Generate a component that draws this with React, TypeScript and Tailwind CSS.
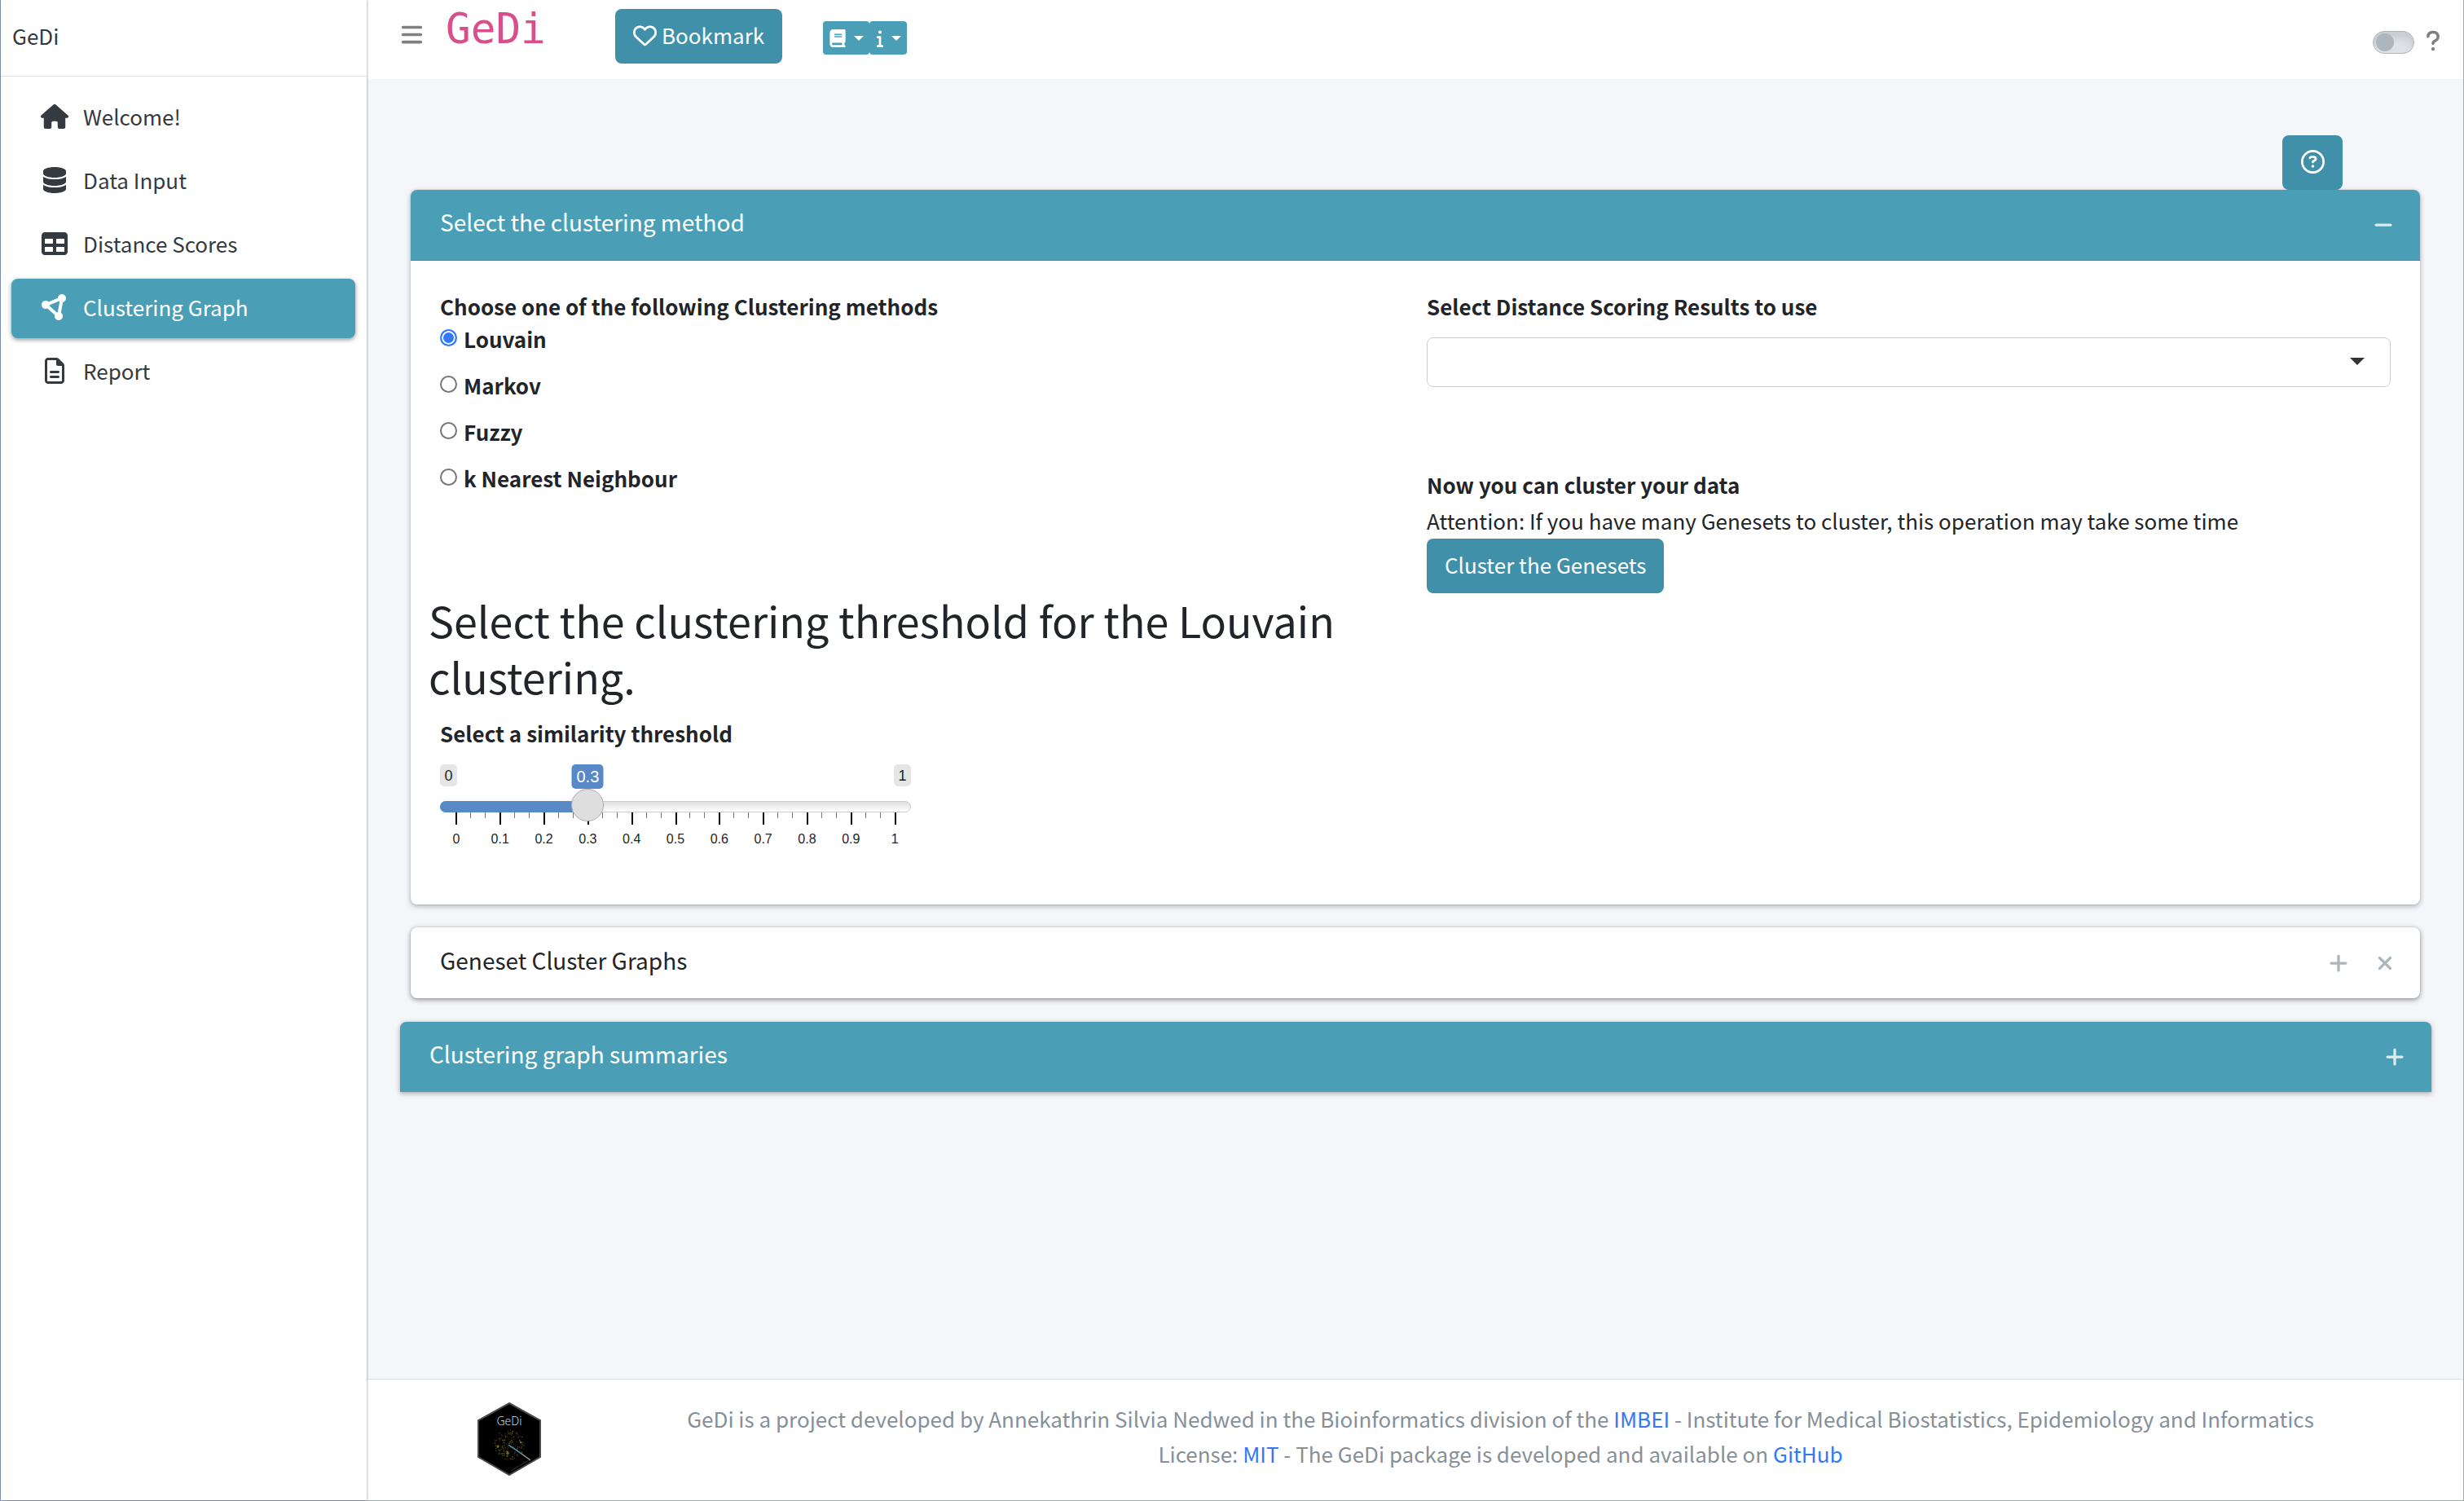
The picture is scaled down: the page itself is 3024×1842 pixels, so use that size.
import React, { useState } from "react";
import {
  FaBars,
  FaBook,
  FaCircleNodes,
  FaDatabase,
  FaHouse,
  FaInfo,
  FaMinus,
  FaPlus,
  FaQuestion,
  FaRegCircleQuestion,
  FaRegFileLines,
  FaRegHeart,
  FaTable,
  FaXmark,
} from "react-icons/fa6";

const navItems = [
  { label: "Welcome!", Icon: FaHouse },
  { label: "Data Input", Icon: FaDatabase },
  { label: "Distance Scores", Icon: FaTable },
  { label: "Clustering Graph", Icon: FaCircleNodes },
  { label: "Report", Icon: FaRegFileLines },
];

const methods = ["Louvain", "Markov", "Fuzzy", "k Nearest Neighbour"];
const gridLabels = ["0", "0.1", "0.2", "0.3", "0.4", "0.5", "0.6", "0.7", "0.8", "0.9", "1"];

function Caret() {
  return (
    <svg viewBox="0 0 12 6" className="h-[6px] w-[12px]" aria-hidden="true">
      <path d="M0 0h12L6 6z" fill="currentColor" />
    </svg>
  );
}

function Sidebar() {
  return (
    <aside className="z-10 flex w-[449px] shrink-0 flex-col bg-white shadow-[0_0_3px_rgba(0,0,0,0.45)]">
      <div className="flex h-[94px] items-center border-b border-[#dee2e6] pb-[6px] pl-[14px] text-[#343a40]">
        GeDi
      </div>
      <nav className="flex flex-col gap-[5px] pt-[14px] pr-[14px] pl-[13px]">
        {navItems.map(({ label, Icon }) => (
          <a
            key={label}
            href="#"
            aria-current={label === "Clustering Graph" ? "page" : undefined}
            className={
              label === "Clustering Graph"
                ? "flex h-[73px] items-center rounded-[8px] bg-[#4a9fb6] pl-[34px] text-white shadow-[0_2px_6px_rgba(0,0,0,0.24),0_2px_4px_rgba(0,0,0,0.2)]"
                : "flex h-[73px] items-center rounded-[8px] pl-[34px] text-[#343a40]"
            }
          >
            <span className="flex w-[38px] justify-center pb-[4px]">
              <Icon size={label === "Welcome!" ? 34 : 32} />
            </span>
            <span className="pb-[4px] pl-[16px]">{label}</span>
          </a>
        ))}
      </nav>
    </aside>
  );
}

function Navbar() {
  return (
    <header className="flex h-[97px] items-start bg-white pr-[23px] pl-[41px]">
      <button aria-label="Toggle sidebar" className="mt-[28px] text-[#808080]">
        <FaBars size={29} />
      </button>
      <code className="mt-[4px] ml-[27px] w-[208px] font-['DejaVu_Sans_Mono',monospace] text-[51px] leading-[64px] text-[#d84f8b]">
        GeDi
      </code>
      <button className="mt-[11px] flex h-[67px] items-center gap-[6px] rounded-[8px] bg-[#4190aa] px-[22px] text-white">
        <FaRegHeart size={29} className="mb-[2px]" />
        <span className="pb-[4px]">Bookmark</span>
      </button>
      <div className="mt-[26px] ml-[50px] flex text-white">
        <button aria-label="Documentation" className="flex h-[41px] w-[57px] items-center justify-center gap-[9px] rounded-[4px] bg-[#4a9fb6]">
          <FaBook size={22} />
          <Caret />
        </button>
        <button aria-label="Information" className="flex h-[41px] w-[46px] items-center justify-center gap-[9px] rounded-[4px] bg-[#4a9fb6]">
          <FaInfo size={22} className="w-[10px]" />
          <Caret />
        </button>
      </div>
      <label className="relative mt-[38px] ml-auto flex">
        <input
          type="checkbox"
          role="switch"
          aria-label="Dark mode"
          className="h-[28px] w-[51px] appearance-none rounded-full border border-[#adb5bd] bg-[#dee2e6] shadow-[inset_0_8px_8px_rgba(0,0,0,0.1)]"
        />
        <span className="pointer-events-none absolute top-[3px] left-[4px] size-[22px] rounded-full bg-[#adb5bd]" />
      </label>
      <button aria-label="Help" className="mt-[36px] ml-[9px] text-[#808080]">
        <FaQuestion size={28} />
      </button>
    </header>
  );
}

function ThresholdSlider() {
  const [value, setValue] = useState(0.3);
  return (
    <div className="mt-[18px] w-[578px] font-['Liberation_Sans',Arial,sans-serif] text-[#212529]">
      <div className="flex h-[30px] items-start justify-between text-[18px]">
        <span className="flex h-[27px] w-[21px] items-center justify-center rounded-[5px] bg-[#e5e5e5]">0</span>
        <span className="flex h-[27px] w-[21px] items-center justify-center rounded-[5px] bg-[#e5e5e5]">1</span>
      </div>
      <div className="relative">
        <div className="absolute top-[15px] left-0 h-[14px] w-full rounded-[7px] border border-[#cccccc] bg-linear-to-b from-[#dedede] to-white" />
        <div
          className="absolute top-[15px] left-0 h-[14px] rounded-l-[7px] bg-[#5689c5]"
          style={{ width: 20 + value * 538 }}
        />
        <svg viewBox="0 0 578 15" className="absolute top-[29px] left-0 h-[15px] w-full" shapeRendering="crispEdges" aria-hidden="true">
          {Array.from({ length: 31 }, (_, i) => (
            <rect
              key={i}
              x={Math.round(19 + (i * 539) / 30)}
              y={0}
              width={i % 3 === 0 ? 2 : 1}
              height={i % 3 === 0 ? 15 : 7}
              fill={i % 3 === 0 ? "#000000" : "#777777"}
            />
          ))}
        </svg>
        <output
          htmlFor="threshold"
          className="absolute -top-[30px] flex h-[30px] w-[39px] -translate-x-1/2 items-center justify-center rounded-[5px] bg-[#5689c5] text-[20px] text-white"
          style={{ left: 20 + value * 538 }}
        >
          {value}
        </output>
        <input
          id="threshold"
          type="range"
          min={0}
          max={1}
          step={0.1}
          value={value}
          onChange={(e) => setValue(Number(e.target.value))}
          className="relative block h-[40px] w-full appearance-none bg-transparent [&::-webkit-slider-thumb]:size-[40px] [&::-webkit-slider-thumb]:appearance-none [&::-webkit-slider-thumb]:rounded-full [&::-webkit-slider-thumb]:border [&::-webkit-slider-thumb]:border-[#ababab] [&::-webkit-slider-thumb]:bg-[#dedede]"
        />
      </div>
      <div className="-mx-[7px] mt-[12px] grid grid-cols-11 text-center text-[16px] leading-[20px]">
        {gridLabels.map((l) => (
          <span key={l}>{l}</span>
        ))}
      </div>
    </div>
  );
}

function MethodCard() {
  const [method, setMethod] = useState("Louvain");
  return (
    <section className="mr-[14px] ml-[13px] rounded-[8px] bg-white pb-[70px] shadow-[0_0_2px_rgba(0,0,0,0.125),0_2px_6px_rgba(0,0,0,0.3)]">
      <div className="flex h-[87px] items-center justify-between rounded-t-[8px] border-b border-[#3f8ca2] bg-[#4a9fb6] pr-[32px] pl-[36px] text-white">
        <h3 className="pb-[8px] text-[28px]">Select the clustering method</h3>
        <button aria-label="Collapse" className="text-white/80">
          <FaMinus size={26} />
        </button>
      </div>
      <div className="grid grid-cols-2 px-[22px] pt-[36px]">
        <div>
          <fieldset className="px-[14px]">
            <legend className="font-bold">Choose one of the following Clustering methods</legend>
            <div className="flex flex-col gap-[17px]">
              {methods.map((m) => (
                <label key={m} className="flex items-start gap-[8px] font-bold">
                  <input
                    type="radio"
                    name="method"
                    checked={method === m}
                    onChange={() => setMethod(m)}
                    className="mt-[8px] size-[21px] appearance-none rounded-full border-2 border-[#767676] bg-white checked:border-[#3478f6] checked:bg-[#3478f6] checked:shadow-[inset_0_0_0_2px_white]"
                  />
                  {m}
                </label>
              ))}
            </div>
          </fieldset>
          <h2 className="mt-[119px] text-[52px] leading-[69px]">
            Select the clustering threshold for the Louvain clustering.
          </h2>
          <div className="px-[14px] pt-[16px]">
            <label htmlFor="threshold" className="block font-bold">
              Select a similarity threshold
            </label>
            <ThresholdSlider />
          </div>
        </div>
        <div className="px-[14px]">
          <label htmlFor="scores" className="block font-bold">
            Select Distance Scoring Results to use
          </label>
          <div className="relative mt-[18px]">
            <select id="scores" className="block h-[61px] w-full appearance-none rounded-[8px] border border-[#cccccc] bg-white px-[24px]">
              <option value=""></option>
            </select>
            <svg viewBox="0 0 18 9" className="pointer-events-none absolute top-[25px] right-[32px] h-[9px] w-[18px]" aria-hidden="true">
              <path d="M0 0h18L9 9z" fill="#333333" />
            </svg>
          </div>
          <p className="mt-[98px] leading-[44px] font-bold">Now you can cluster your data</p>
          <p className="leading-[44px]">
            Attention: If you have many Genesets to cluster, this operation may take some time
          </p>
          <button className="flex h-[67px] items-center rounded-[8px] bg-[#4190aa] px-[22px] pb-[4px] text-white">
            Cluster the Genesets
          </button>
        </div>
      </div>
    </section>
  );
}

function HexLogo() {
  const noise = (n: number) => {
    const v = Math.sin(n * 127.1) * 43758.5453;
    return v - Math.floor(v);
  };
  const dots = Array.from({ length: 170 }, (_, i) => {
    const a = noise(i + 1) * Math.PI * 2;
    const r = 19 * Math.sqrt(noise(i + 501));
    return { x: 39 + r * Math.cos(a), y: 52 + r * Math.sin(a), o: 0.15 + 0.5 * noise(i + 901) };
  });
  return (
    <svg viewBox="0 0 78 90" className="h-[90px] w-[78px]" role="img" aria-label="GeDi logo">
      <path d="M39 1L77 22V67L39 89L1 67V22z" fill="#000000" stroke="#4a4a4a" strokeWidth="2" />
      <text x="39" y="28" fill="#d8d8d8" fontSize="14" textAnchor="middle" fontFamily="Noto Sans" fontWeight="300">
        GeDi
      </text>
      {dots.map((d, i) => (
        <circle key={i} cx={d.x} cy={d.y} r="0.7" fill="#a8953a" opacity={d.o} />
      ))}
      <circle cx="25" cy="54" r="1.4" fill="#a8953a" opacity="0.7" />
      <circle cx="37" cy="62" r="2" fill="#a8953a" opacity="0.6" />
      <circle cx="53" cy="49" r="1.3" fill="#a8953a" opacity="0.7" />
      <path d="M38 52L54 63" stroke="#5596c0" strokeWidth="1.5" />
      <path d="M54 63L65 71" stroke="#aaaaaa" strokeWidth="1.3" />
      <path d="M41 84L63 71" stroke="#333333" strokeWidth="1" />
    </svg>
  );
}

function Footer() {
  return (
    <footer className="flex h-[149px] items-start border-t border-[#dee2e6] bg-white pt-[26px] pr-[32px] pl-[33px] text-[#869099]">
      <div className="mt-[2px] flex w-[209px] shrink-0 pl-[103px]">
        <HexLogo />
      </div>
      <p className="grow text-center leading-[43px]">
        GeDi is a project developed by Annekathrin Silvia Nedwed in the Bioinformatics division of the{" "}
        <a href="#" className="text-[#3478f6]">IMBEI</a> - Institute for Medical Biostatistics, Epidemiology and Informatics
        <br />
        License: <a href="#" className="text-[#3478f6]">MIT</a> - The GeDi package is developed and available on{" "}
        <a href="#" className="text-[#3478f6]">GitHub</a>
      </p>
    </footer>
  );
}

export default function App() {
  return (
    <div className="flex min-h-screen border-x border-b border-[#93a8dc] bg-[#f4f6f9] font-['Noto_Sans_CJK_SC',sans-serif] text-[26px] leading-[40px] text-[#212529]">
      <Sidebar />
      <div className="flex min-w-0 grow flex-col">
        <Navbar />
        <main className="grow pt-[69px] pr-[39px] pl-[41px]">
          <div className="flex justify-end pr-[109px]">
            <button aria-label="Show tour" className="flex h-[67px] w-[74px] items-center justify-center rounded-[8px] bg-[#4190aa] pb-[3px] text-white">
              <FaRegCircleQuestion size={29} />
            </button>
          </div>
          <MethodCard />
          <section className="mt-[28px] mr-[14px] ml-[13px] flex h-[87px] items-center justify-between rounded-[8px] bg-white pr-[30px] pl-[36px] shadow-[0_0_2px_rgba(0,0,0,0.2),0_2px_6px_rgba(0,0,0,0.4)]">
            <h3 className="pb-[8px] text-[28px]">Geneset Cluster Graphs</h3>
            <div className="flex items-center gap-[31px] text-[#adb5bd]">
              <button aria-label="Expand">
                <FaPlus size={26} />
              </button>
              <button aria-label="Close">
                <FaXmark size={26} />
              </button>
            </div>
          </section>
          <section className="mt-[29px] flex h-[86px] items-center justify-between rounded-t-[8px] bg-[#4a9fb6] pr-[32px] pl-[36px] text-white shadow-[0_0_2px_rgba(0,0,0,0.125),0_2px_6px_rgba(0,0,0,0.3)]">
            <h3 className="pb-[8px] text-[28px]">Clustering graph summaries</h3>
            <button aria-label="Expand" className="text-white/80">
              <FaPlus size={26} />
            </button>
          </section>
        </main>
        <Footer />
      </div>
    </div>
  );
}
